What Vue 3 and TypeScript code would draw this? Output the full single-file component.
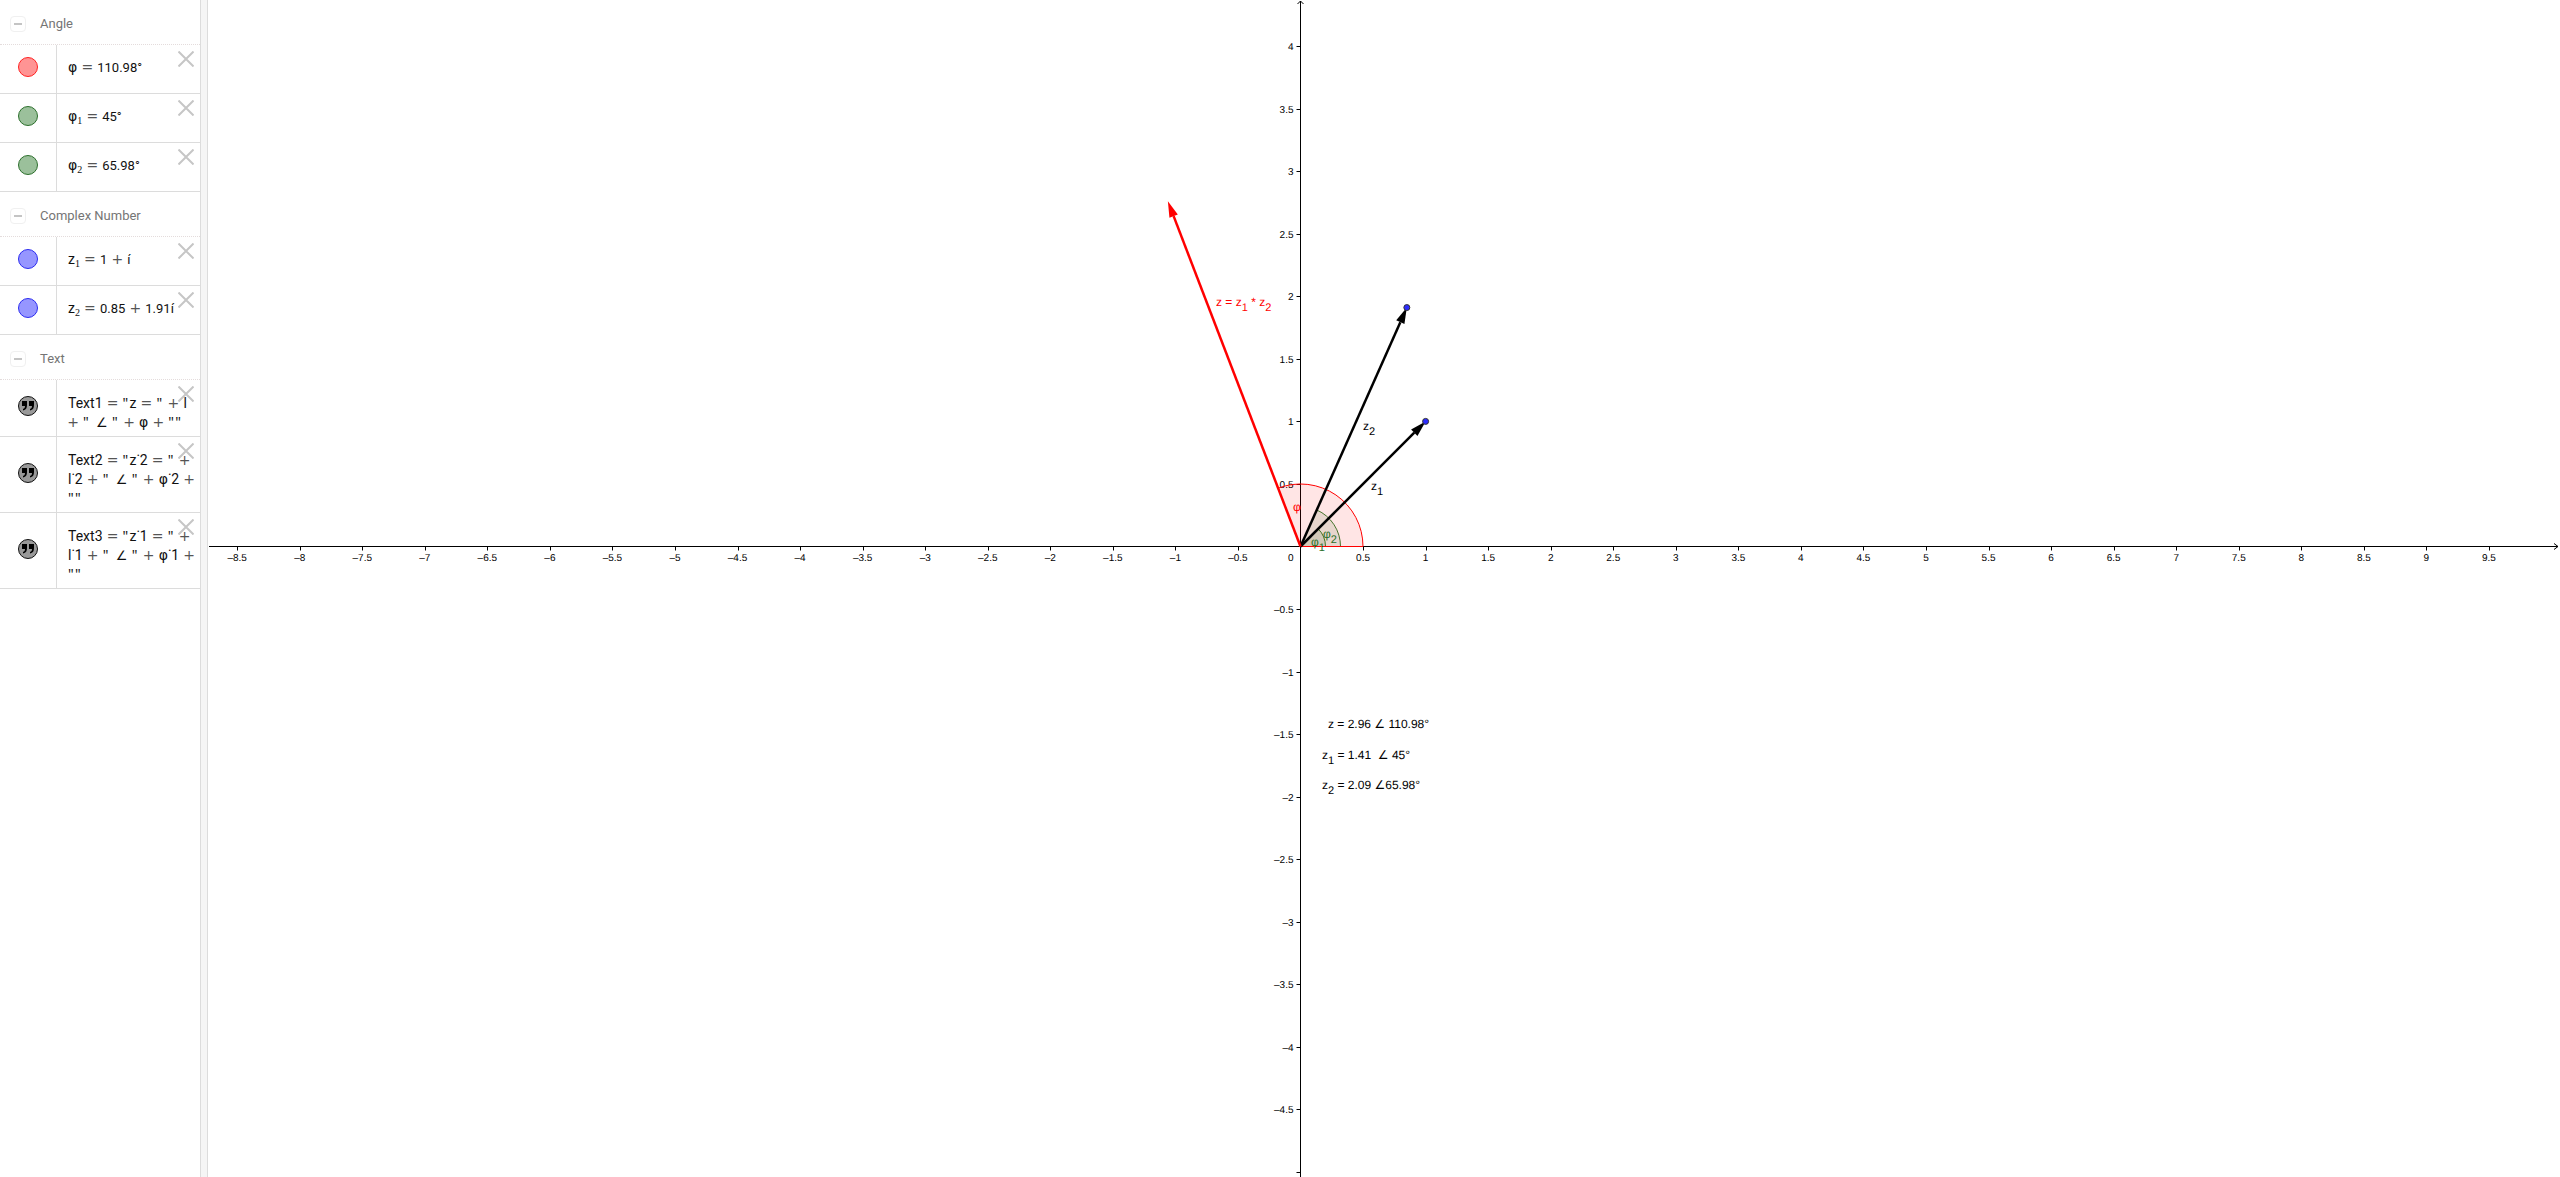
<script setup lang="ts">
import { computed, onBeforeUnmount, onMounted, ref } from 'vue'

type Kind = 'v' | 'o' | 's' | 'n' | 'q' | 'a' | 't'
type Token = [Kind, string]
interface Item { name: string; marble: string; text?: boolean; lines: Token[][] }
interface Group { title: string; items: Item[] }

const eq: Token = ['o', '=']
const plus: Token = ['o', '+']
const quote: Token = ['q', '"']

const groups: Group[] = [
  {
    title: 'Angle',
    items: [
      { name: 'φ', marble: 'red', lines: [[['v', 'φ'], eq, ['n', '110.98°']]] },
      { name: 'φ1', marble: 'green', lines: [[['v', 'φ'], ['s', '1'], eq, ['n', '45°']]] },
      { name: 'φ2', marble: 'green', lines: [[['v', 'φ'], ['s', '2'], eq, ['n', '65.98°']]] },
    ],
  },
  {
    title: 'Complex Number',
    items: [
      { name: 'z1', marble: 'blue', lines: [[['t', 'z'], ['s', '1'], eq, ['n', '1'], plus, ['n', 'í']]] },
      { name: 'z2', marble: 'blue', lines: [[['t', 'z'], ['s', '2'], eq, ['n', '0.85'], plus, ['n', '1.91í']]] },
    ],
  },
  {
    title: 'Text',
    items: [
      {
        name: 'Text1', marble: 'gray', text: true, lines: [
          [['t', 'Text1'], eq, quote, ['t', 'z'], eq, quote, plus, ['t', 'l']],
          [plus, quote, ['a', '∠'], quote, plus, ['v', 'φ'], plus, quote, quote],
        ],
      },
      {
        name: 'Text2', marble: 'gray', text: true, lines: [
          [['t', 'Text2'], eq, quote, ['t', 'z˙2'], eq, quote, plus],
          [['t', 'l˙2'], plus, quote, ['a', '∠'], quote, plus, ['v', 'φ'], ['t', '˙2'], plus],
          [quote, quote],
        ],
      },
      {
        name: 'Text3', marble: 'gray', text: true, lines: [
          [['t', 'Text3'], eq, quote, ['t', 'z˙1'], eq, quote, plus],
          [['t', 'l˙1'], plus, quote, ['a', '∠'], quote, plus, ['v', 'φ'], ['t', '˙1'], plus],
          [quote, quote],
        ],
      },
    ],
  },
]

const board = ref<HTMLElement | null>(null)
const width = ref(window.innerWidth - 208)
const height = ref(window.innerHeight)
let observer: ResizeObserver | undefined
onMounted(() => {
  observer = new ResizeObserver(() => {
    if (!board.value) return
    width.value = board.value.clientWidth
    height.value = board.value.clientHeight
  })
  if (board.value) observer.observe(board.value)
})
onBeforeUnmount(() => observer?.disconnect())

// Graph coordinates: pixels per unit and the position of the origin.
const unit = 125.1
const ox = 1092.5
const oy = 546.5
const px = (x: number) => ox + x * unit
const py = (y: number) => oy - y * unit
const label = (n: number) => String(n).replace('-', '–')

const xTicks = computed(() => {
  const out: number[] = []
  for (let i = Math.ceil((-ox / unit) * 2); px(i / 2) < width.value - 20; i++) {
    if (i !== 0 && px(i / 2) > 15) out.push(i / 2)
  }
  return out
})
const yTicks = computed(() => {
  const out: number[] = []
  for (let i = Math.floor((oy / unit) * 2); py(i / 2) < height.value; i--) {
    if (i !== 0) out.push(i / 2)
  }
  return out
})
// A label too close to the bottom edge is left out; its tick stays.
const yLabels = computed(() => yTicks.value.filter((y) => py(y) < height.value - 10))

const sector = (r: number, deg: number) => {
  const a = (deg * Math.PI) / 180
  return `M${ox} ${oy}H${ox + r}A${r} ${r} 0 0 0 ${ox + r * Math.cos(a)} ${oy - r * Math.sin(a)}Z`
}
const angles = [
  { cls: 'part', d: sector(25, 45) },
  { cls: 'part', d: sector(40, 65.98) },
  { cls: 'phi', d: sector(62.5, 110.98) },
]

const vector = (x: number, y: number, cls: string) => {
  const len = Math.hypot(x, y)
  const ux = x / len
  const uy = -y / len
  const tx = px(x)
  const ty = py(y)
  const bx = tx - ux * 16
  const by = ty - uy * 16
  return {
    cls, bx, by,
    head: `${tx},${ty} ${bx - uy * 4.5},${by + ux * 4.5} ${bx + uy * 4.5},${by - ux * 4.5}`,
  }
}
const vectors = [
  vector(1, 1, 'black'),
  vector(0.85, 1.91, 'black'),
  vector(-1.06, 2.76, 'crimson'),
]
const points = [[1, 1], [0.85, 1.91]]
</script>

<template>
  <div class="app">
    <aside class="algebra">
      <section v-for="g in groups" :key="g.title">
        <header class="group">
          <button class="fold" :aria-label="'Collapse ' + g.title"></button>
          <span>{{ g.title }}</span>
        </header>
        <div v-for="it in g.items" :key="it.name" class="item">
          <div class="side">
            <button class="marble" :class="it.marble" :aria-label="'Show or hide ' + it.name">
              <svg v-if="it.text" width="12" height="10" viewBox="0 0 12 10">
                <path d="M0 0H5V4C5 7 4 9 1 9.500V8C2.500 7.500 3 6.500 3 5H0ZM7 0H12V4C12 7 11 9 8 9.500V8C9.500 7.500 10 6.500 10 5H7Z" />
              </svg>
            </button>
          </div>
          <div class="value">
            <div v-for="(line, i) in it.lines" :key="i" class="line">
              <span v-for="(t, j) in line" :key="j" :class="'k-' + t[0]">{{ t[1] }}</span>
            </div>
          </div>
          <button class="close" :aria-label="'Delete ' + it.name">
            <svg width="16" height="16" viewBox="0 0 16 16"><path d="M0.500 0.500L15.500 15.500M15.500 0.500L0.500 15.500" /></svg>
          </button>
        </div>
      </section>
    </aside>
    <div class="splitter"></div>
    <main ref="board" class="board">
      <svg class="graph" :width="width" :height="height">
        <g class="axis">
          <path :d="`M1 ${oy}H${width - 2}M${width - 6} ${oy - 3}L${width - 2} ${oy}L${width - 6} ${oy + 3}`" />
          <path :d="`M${ox} ${height}V1M${ox - 3} 4L${ox} 1L${ox + 3} 4`" />
          <path v-for="x in xTicks" :key="'x' + x" :d="`M${Math.round(px(x)) + 0.5} ${oy}v4`" />
          <path v-for="y in yTicks" :key="'y' + y" :d="`M${ox} ${Math.round(py(y)) + 0.5}h-4`" />
        </g>
        <g class="ticks">
          <text v-for="x in xTicks" :key="x" :x="px(x)" :y="oy + 14" text-anchor="middle">{{ label(x) }}</text>
          <text :x="ox - 7" :y="oy + 14" text-anchor="end">0</text>
          <text v-for="y in yLabels" :key="y" :x="ox - 7" :y="py(y) + 4" text-anchor="end">{{ label(y) }}</text>
        </g>
        <path v-for="(a, i) in angles" :key="i" :class="a.cls" :d="a.d" />
        <g v-for="(v, i) in vectors" :key="i" :class="v.cls">
          <line :x1="ox" :y1="oy" :x2="v.bx" :y2="v.by" />
          <polygon :points="v.head" />
        </g>
        <circle v-for="(p, i) in points" :key="i" class="point" :cx="px(p[0])" :cy="py(p[1])" r="3" />
        <g class="labels">
          <text class="t-red" x="1008" y="306">z = z<tspan class="sub" dy="5">1</tspan><tspan dy="-5"> * z</tspan><tspan class="sub" dy="5">2</tspan></text>
          <text x="1155" y="430">z<tspan class="sub" dy="5">2</tspan></text>
          <text x="1163" y="490">z<tspan class="sub" dy="5">1</tspan></text>
          <text class="t-red" x="1085" y="511">φ</text>
          <text class="t-green" x="1115" y="538">φ<tspan class="sub" dy="5">2</tspan></text>
          <text class="t-green" x="1103" y="546">φ<tspan class="sub" dy="5">1</tspan></text>
          <text x="1120" y="728">z = 2.96 ∠ 110.98°</text>
          <text x="1114" y="759">z<tspan class="sub" dy="5">1</tspan><tspan dy="-5"> = 1.41 &nbsp;∠ 45°</tspan></text>
          <text x="1114" y="789">z<tspan class="sub" dy="5">2</tspan><tspan dy="-5"> = 2.09 ∠65.98°</tspan></text>
        </g>
      </svg>
    </main>
  </div>
</template>

<style>
html, body { margin: 0; background: #fff; }
</style>

<style scoped>
.app { display: flex; height: 100vh; overflow: hidden; }
button { padding: 0; border: 0; background: none; box-sizing: border-box; }
.algebra { flex: 0 0 200px; overflow: hidden; background: #fff; }
.splitter { flex: 0 0 8px; box-sizing: border-box; border: solid #dcdcdc; border-width: 0 1px; background: #f5f5f5; }
.board { flex: 1; min-width: 0; overflow: hidden; }
.graph { display: block; text-rendering: geometricPrecision; }

.group {
  display: flex; align-items: center; gap: 14px; height: 45px; box-sizing: border-box;
  padding: 4px 10px 0; border-bottom: 1px dotted #e4dcdc;
  font: 13px/20px Roboto, "Noto Sans", sans-serif; color: #757575;
}
.fold { display: flex; align-items: center; justify-content: center; width: 16px; height: 16px; border: 1px solid #f0f0f0; border-radius: 4px; }
.fold::after { content: ""; width: 8px; height: 2px; background: #c4c4c4; }

.item { position: relative; display: flex; border-bottom: 1px solid #dcdcdc; }
.side { flex: 0 0 57px; box-sizing: border-box; display: flex; align-items: center; justify-content: center; padding-bottom: 4px; border-right: 1px solid #dcdcdc; }
.marble { display: flex; align-items: center; justify-content: center; width: 20px; height: 20px; border: 1px solid; border-radius: 50%; }
.red { background: #ff9494; border-color: #f22; }
.green { background: #9bc09b; border-color: #2d702d; }
.blue { background: #9696ff; border-color: #2c2cf0; }
.gray { background: #999; border-color: #111; }
.close { position: absolute; top: 6px; right: 6px; width: 16px; height: 16px; }
.close svg { display: block; }
.close path { stroke: #c6c6c6; stroke-width: 2; fill: none; }

.value { flex: 1; min-width: 0; box-sizing: border-box; min-height: 48px; padding: 13px 0 5px 11px; color: #111; }
.line { height: 19px; white-space: nowrap; display: flex; align-items: baseline; font: 14px/19px Roboto, "Noto Sans", sans-serif; }
.k-v { font-family: "DejaVu Sans", sans-serif; }
.k-s { font: 10px/10px "Liberation Serif", serif; position: relative; top: 3px; }
.k-n { font-size: 13px; }
.k-o { display: flex; justify-content: center; width: 10px; margin: 0 5px; font-family: "DejaVu Sans", sans-serif; font-size: 14px; color: #555; }
.line > .k-o:first-child { margin-left: 0; }
.k-q { width: 7px; font-family: "Noto Sans", sans-serif; }
.k-a { width: 10px; margin: 0 6px; font-family: "DejaVu Sans", sans-serif; font-size: 13px; }

.axis path { fill: none; stroke: #000; }
.ticks { font: 10px "Liberation Sans", Arial, sans-serif; fill: #000; }
.labels { font: 12px "Liberation Sans", Arial, sans-serif; fill: #000; }
.sub { font-size: 11px; }
.labels .t-red { fill: #f00; }
.labels .t-green { fill: #2a702a; }
.phi { fill: rgba(255, 0, 0, 0.1); stroke: #f00; }
.part { fill: rgba(0, 100, 0, 0.1); stroke: #006400; stroke-opacity: 0.8; }
.black line, .crimson line { stroke: #000; stroke-width: 2.5; }
.crimson line { stroke: #f00; }
.crimson polygon { fill: #f00; }
.point { fill: #2c2cff; stroke: #333; }
</style>
